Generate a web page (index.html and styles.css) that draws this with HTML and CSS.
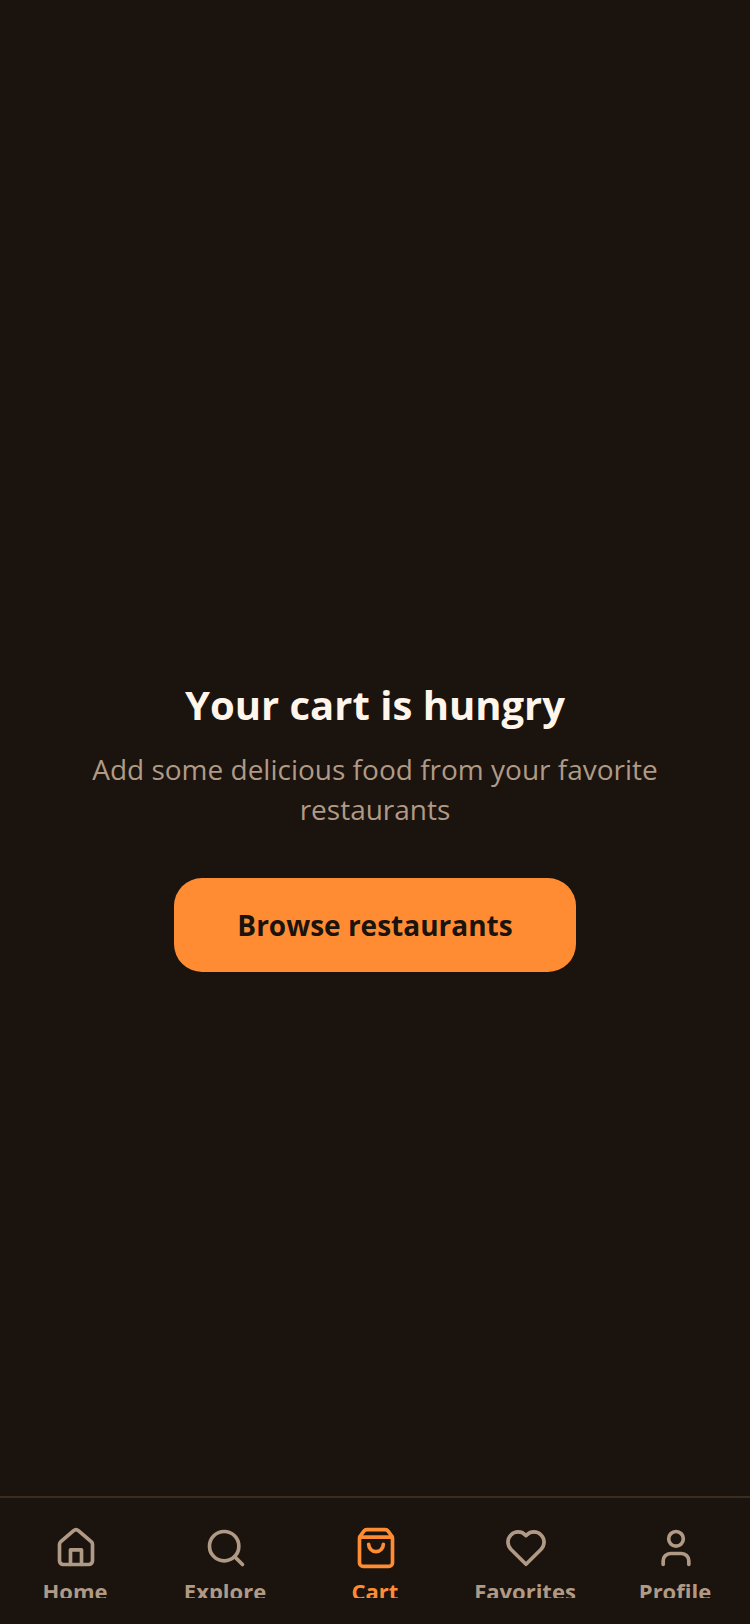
FILE: index.html
```html
<!DOCTYPE html>
<html lang="en">
<head>
<meta charset="utf-8">
<title>Cart</title>
<link rel="stylesheet" href="styles.css">
</head>
<body>
<div class="app">
  <main class="empty">
    <h1 class="title">Your cart is hungry</h1>
    <p class="subtitle">Add some delicious food from your favorite restaurants</p>
    <button class="cta">Browse restaurants</button>
  </main>
  <nav class="tabs">
    <div class="tab">
      <svg class="icon" viewBox="0 0 24 24"><path d="M3 10a2 2 0 0 1 .709-1.528l7-5.999a2 2 0 0 1 2.582 0l7 5.999A2 2 0 0 1 21 10v9a2 2 0 0 1-2 2H5a2 2 0 0 1-2-2z"/><path d="M9 21v-8h6v8"/></svg>
      <div class="label-clip"><span class="label">Home</span></div>
    </div>
    <div class="tab">
      <svg class="icon" viewBox="0 0 24 24"><circle cx="11" cy="11" r="8"/><path d="m21 21-4.3-4.3"/></svg>
      <div class="label-clip"><span class="label">Explore</span></div>
    </div>
    <div class="tab active">
      <svg class="icon" viewBox="0 0 24 24"><path d="M3.4 5.467a2 2 0 0 0-.4 1.2V20a2 2 0 0 0 2 2h14a2 2 0 0 0 2-2V6.667a2 2 0 0 0-.4-1.2l-2-2.667A2 2 0 0 0 17 2H7a2 2 0 0 0-1.6.8z"/><path d="M3.103 6.034h17.794"/><path d="M16 10a4 4 0 0 1-8 0"/></svg>
      <div class="label-clip"><span class="label">Cart</span></div>
    </div>
    <div class="tab">
      <svg class="icon" viewBox="0 0 24 24"><path d="M12 20.9 3.73 12.64a5.53 5.53 0 0 1 7.82-7.82l.45.45.45-.45a5.53 5.53 0 0 1 7.82 7.82z"/></svg>
      <div class="label-clip"><span class="label">Favorites</span></div>
    </div>
    <div class="tab">
      <svg class="icon" viewBox="0 0 24 24"><circle cx="12" cy="7" r="4"/><path d="M19 21v-2a4 4 0 0 0-4-4H9a4 4 0 0 0-4 4v2"/></svg>
      <div class="label-clip"><span class="label">Profile</span></div>
    </div>
  </nav>
</div>
</body>
</html>
```
FILE: styles.css
```css
* { box-sizing: border-box; }
html, body { margin: 0; padding: 0; }
body { background: #1a130e; font-family: "Open Sans", sans-serif; }
.app { width: 750px; height: 1624px; display: flex; flex-direction: column; }
.empty { flex: 1; display: flex; flex-direction: column; align-items: center; justify-content: center; padding: 153px 48px 0; }
.title { margin: 0 0 16px; font-size: 40px; line-height: 56px; font-weight: 700; color: #fff5eb; text-align: center; }
.subtitle { margin: 0 0 49px; font-size: 28px; line-height: 40px; color: #b09a85; text-align: center; }
.cta { width: 402px; height: 94px; border: 0; border-radius: 28px; background: #ff8c33; color: #1a130e; font-family: inherit; font-size: 28px; font-weight: 700; }
.tabs { height: 128px; border-top: 2px solid #3a2e22; display: flex; padding-top: 28px; }
.tab { flex: 1; display: flex; flex-direction: column; align-items: center; color: #b09a85; }
.tab.active { color: #ff8c33; }
.icon { width: 44px; height: 44px; margin-left: 2px; fill: none; stroke: currentColor; stroke-width: 2; stroke-linecap: round; stroke-linejoin: round; }
.label-clip { height: 22px; margin-top: 6px; overflow: hidden; display: flex; justify-content: center; }
.label { font-size: 22px; line-height: 30px; font-weight: 700; white-space: nowrap; }
```
